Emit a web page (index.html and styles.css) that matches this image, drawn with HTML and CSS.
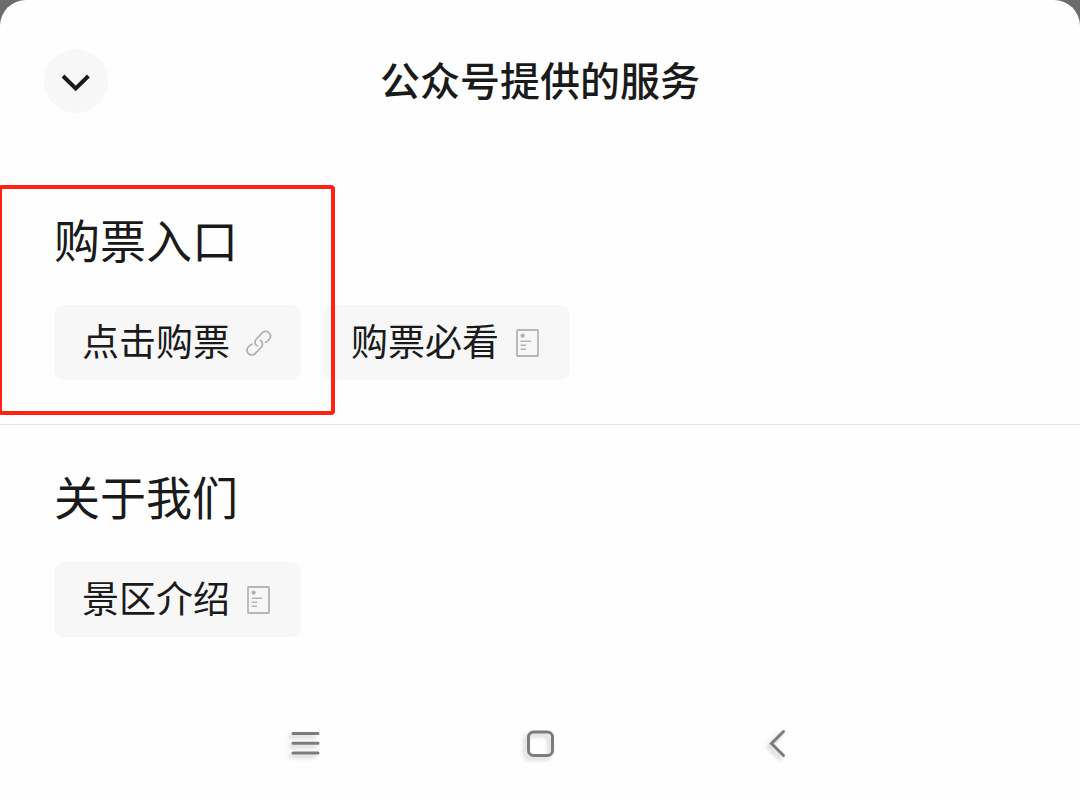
FILE: index.html
```html
<!DOCTYPE html>
<html lang="zh-CN">
<head>
<meta charset="utf-8">
<meta name="viewport" content="width=device-width, initial-scale=1">
<title>公众号提供的服务</title>
<link rel="stylesheet" href="styles.css">
</head>
<body>
<svg class="symbols" aria-hidden="true">
  <symbol id="icon-article" viewBox="0 0 24 30">
    <rect x="1" y="2" width="21" height="26" rx="0.6" fill="none" stroke="#b5b5b5" stroke-width="1.8"/>
    <circle cx="6.6" cy="7.7" r="2.1" fill="#b0b0b0"/>
    <path d="M4.6 13.3h10.5M4.6 17.2h5.5M4.6 21.2h5.5" stroke="#b5b5b5" stroke-width="1.5" fill="none"/>
  </symbol>
</svg>
<main class="sheet">
  <header class="header">
    <button class="close" type="button" aria-label="收起">
      <svg width="32" height="24" viewBox="0 0 32 24" aria-hidden="true"><path d="M3 7L15.7 19.5L28.4 7" fill="none" stroke="#1a1a1a" stroke-width="4"/></svg>
    </button>
    <h1 class="title">公众号提供的服务</h1>
  </header>

  <section class="group">
    <h2 class="group-title">购票入口</h2>
    <div class="chips">
      <a class="chip" href="#buy">
        <span class="chip-label">点击购票</span>
        <svg class="chip-icon" viewBox="0 0 24 30" aria-hidden="true">
          <g fill="none" stroke="#b0b0b0" stroke-width="1.7" stroke-linecap="round">
            <path d="M10 17.8C7.6 16.4 7.2 13.4 9.2 11.2L14.8 5.2C16.8 3 20 2.8 22 4.8C24 6.8 23.8 9.6 21.9 11.7C21 12.7 20 13.6 18.4 14.2"/>
            <path d="M13.4 12.6C15.8 14 16.2 17 14.2 19.2L8.6 25.2C6.6 27.4 3.4 27.6 1.4 25.6C-.6 23.6 -.4 20.8 1.5 18.7C2.4 17.7 3.4 16.8 5 16.2"/>
          </g>
        </svg>
      </a>
      <a class="chip" href="#notice">
        <span class="chip-label">购票必看</span>
        <svg class="chip-icon" aria-hidden="true"><use href="#icon-article"/></svg>
      </a>
    </div>
    <div class="highlight"></div>
  </section>

  <section class="group">
    <h2 class="group-title">关于我们</h2>
    <div class="chips">
      <a class="chip" href="#intro">
        <span class="chip-label">景区介绍</span>
        <svg class="chip-icon" aria-hidden="true"><use href="#icon-article"/></svg>
      </a>
    </div>
  </section>

  <nav class="system-nav">
    <button class="nav-button" type="button" aria-label="菜单">
      <svg class="nav-icon" viewBox="0 0 32 32" aria-hidden="true"><path d="M5 5.5h25M5 15.2h25M5 25h25"/></svg>
    </button>
    <button class="nav-button" type="button" aria-label="主页">
      <svg class="nav-icon" viewBox="0 0 32 32" aria-hidden="true"><rect x="4.5" y="4" width="24" height="23.5" rx="5"/></svg>
    </button>
    <button class="nav-button" type="button" aria-label="返回">
      <svg class="nav-icon" viewBox="0 0 32 32" aria-hidden="true"><path d="M23.5 3.5L11.5 15.5L23.5 27.5"/></svg>
    </button>
  </nav>
</main>
</body>
</html>
```
FILE: styles.css
```css
* {
  box-sizing: border-box;
}

body {
  margin: 0;
  background: #6b6b6b;
  color: #1a1a1a;
  font-family: "Noto Sans CJK SC", sans-serif;
}

.symbols {
  position: absolute;
  width: 0;
  height: 0;
}

.sheet {
  min-height: 100vh;
  overflow: hidden;
  background: #fefefe;
  border-radius: 26px 26px 0 0;
}

.header {
  display: grid;
  grid-template-columns: 64px 1fr 64px;
  align-items: center;
  padding: 49px 44px 55px;
}

.close {
  display: grid;
  place-items: center;
  width: 64px;
  height: 64px;
  padding: 0;
  border: 0;
  border-radius: 50%;
  background: #f7f7f7;
}

.title {
  margin: 0;
  padding-bottom: 4px;
  font-size: 40px;
  font-weight: 500;
  line-height: 60px;
  text-align: center;
}

.group {
  position: relative;
  padding: 44px 54px;
}

.group + .group {
  border-top: 1px solid #e6e6e6;
}

.group-title {
  margin: 0 0 40px;
  font-size: 46px;
  font-weight: 400;
  line-height: 53px;
}

.chips {
  display: flex;
  flex-wrap: wrap;
  gap: 22px;
}

.chip {
  display: flex;
  align-items: center;
  gap: 17px;
  padding: 10px 30px 10px 28px;
  border-radius: 10px;
  background: #f7f7f7;
  color: inherit;
  font-size: 37px;
  line-height: 51px;
  text-decoration: none;
}

.chip-label {
  padding-bottom: 4px;
}

.chip-icon {
  width: 24px;
  height: 30px;
  overflow: visible;
}

.highlight {
  position: absolute;
  top: 17px;
  bottom: 9px;
  left: -2px;
  width: 337px;
  border: 4px solid #ff2212;
  border-radius: 4px;
  pointer-events: none;
}

.system-nav {
  display: flex;
  justify-content: center;
  gap: 204px;
  padding: 47px 0 39px;
}

.nav-button {
  padding: 0;
  border: 0;
  background: none;
}

.nav-icon {
  display: block;
  width: 32px;
  height: 32px;
  overflow: visible;
  fill: none;
  stroke: #7c7c7c;
  stroke-width: 3;
  stroke-linecap: round;
  filter: drop-shadow(-3px 3px 2px rgba(0, 0, 0, 0.2));
}
```
